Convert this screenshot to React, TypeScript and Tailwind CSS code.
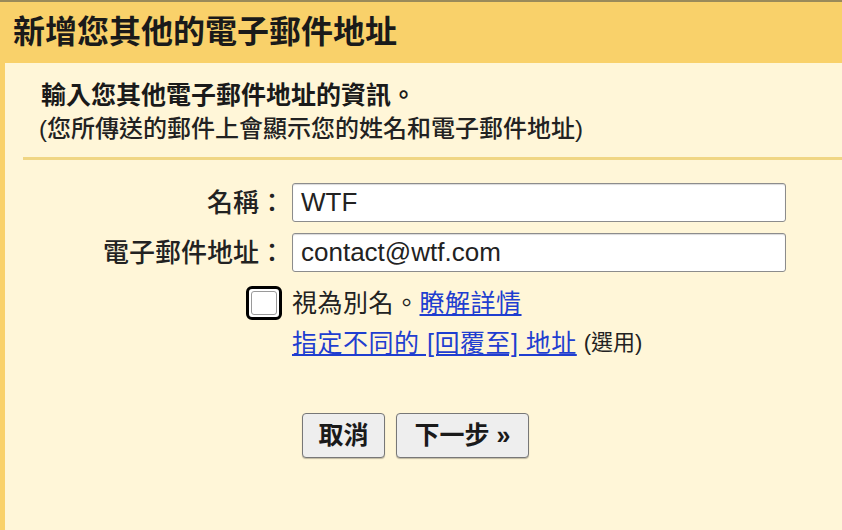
const font = "font-['Liberation_Sans','Noto_Sans_CJK_TC',sans-serif]";

function Field({ label, value }: { label: string; value: string }) {
  return (
    <>
      <div className="h-[39px] flex items-center justify-end text-[26px] leading-[30px] font-medium text-[#222]">
        {label}
      </div>
      <div className="h-[39px] rounded-[3px] border border-[#8c8c8c] bg-white shadow-[inset_0_1px_1px_rgba(0,0,0,0.15)] flex items-center px-[8px] text-[26px] text-[#222]">
        {value}
      </div>
    </>
  );
}

export default function App() {
  return (
    <div className={`w-[842px] h-[530px] overflow-hidden bg-[#fff6d8] flex flex-col ${font}`}>
      <div className="h-[2px] bg-[#9a8a5a] shrink-0" />
      <div className="h-[61px] shrink-0 bg-[#f9d16a] flex items-center pl-[13px] pb-[2px]">
        <h1 className="text-[32px] leading-[40px] font-bold text-[#1a1a1a]">新增您其他的電子郵件地址</h1>
      </div>

      <div className="flex flex-1">
        <div className="w-[5px] bg-[#f9d16a] shrink-0" />
        <div className="flex-1 flex flex-col">
          <div className="pt-[17px] pl-[36px]">
            <p className="text-[25px] leading-[30px] font-bold text-[#1a1a1a]">輸入您其他電子郵件地址的資訊。</p>
            <p className="mt-[4px] -ml-[2px] text-[24px] leading-[30px] text-[#222] font-medium">(您所傳送的郵件上會顯示您的姓名和電子郵件地址)</p>
          </div>
          <div className="ml-[18px] mt-[13px] h-[3px] bg-[#f0d684]" />

          <div className="mt-[23px] grid grid-cols-[280px_494px] gap-x-[7px] gap-y-[11px]">
            <Field label="名稱：" value="WTF" />
            <Field label="電子郵件地址：" value="contact@wtf.com" />

            <div className="flex justify-end items-center pr-[3px] pt-[3px]">
              <div className="w-[36px] h-[34px] rounded-[6px] border-[3px] border-black bg-white flex items-center justify-center">
                <div className="w-[26px] h-[24px] rounded-[3px] border border-[#9a9a9a]" />
              </div>
            </div>
            <div className="flex items-center pt-[3px] text-[25px] leading-[30px] text-[#222] tracking-[0.5px]">
              視為別名。<a className="text-[#1f3ed0] underline">瞭解詳情</a>
            </div>

            <div />
            <div className="-mt-[3px] flex items-center text-[25px] leading-[30px]">
              <a className="text-[#1f3ed0] underline tracking-[0.5px]">指定不同的 [回覆至] 地址</a>
              <span className="ml-[7px] text-[22px] text-[#222]">(選用)</span>
            </div>

            <div />
            <div className="mt-[44px] flex gap-[11px] pl-[10px]">
              <button className="w-[83px] h-[45px] rounded-[4px] border border-[#777] bg-[#eeeeee] shadow-[0_1px_1px_rgba(0,0,0,0.25)] text-[25px] font-bold text-[#1a1a1a]">
                取消
              </button>
              <button className="w-[133px] h-[45px] rounded-[4px] border border-[#777] bg-[#eeeeee] shadow-[0_1px_1px_rgba(0,0,0,0.25)] text-[25px] font-bold text-[#1a1a1a]">
                下一步 »
              </button>
            </div>
          </div>
        </div>
      </div>
    </div>
  );
}
